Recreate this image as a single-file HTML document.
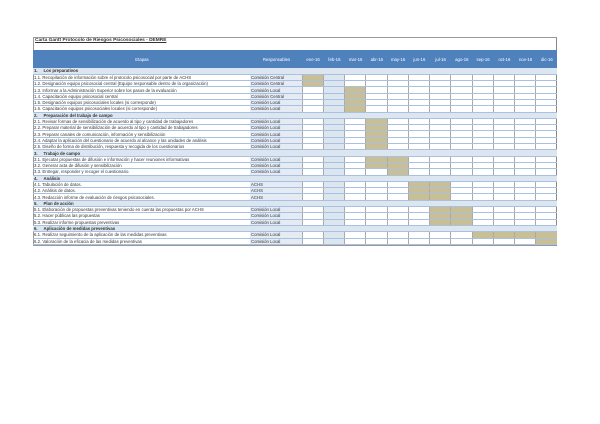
<!DOCTYPE html>
<html><head><meta charset="utf-8"><style>
body{margin:0;width:600px;height:424px;background:#fff;position:relative;font-family:"Liberation Sans",sans-serif;}
#box{position:absolute;left:33px;top:37px;width:524px;height:209px;border:1px solid #999;border-right:1px solid #888;box-sizing:border-box;}
.title{position:absolute;left:35px;top:38px;font-size:4.8px;font-weight:bold;color:#333;text-decoration:underline;}
table{position:absolute;left:33px;top:50px;border-collapse:collapse;table-layout:fixed;width:524px;}
td{padding:0 0 0 1px;font-size:4.3px;line-height:5px;height:6.3px;border-bottom:0.6px solid #a9c0de;white-space:nowrap;overflow:hidden;color:#333;box-sizing:border-box;}
tr.h td{height:18px;background:#4f81bd;color:#fff;text-align:center;border-bottom:none;font-size:4.3px;}
tr.s td{background:#dce6f1;font-weight:bold;}
td.r{background:#e4ebf5;}
td.m{border-left:0.7px solid #aaa;}
td.f{background:#dce6f1;}
td.t{background:#c8bf96;}
tr.s td.m{border-left:none;}
</style></head><body>
<div id="box"></div>
<div class="title">Carta Gantt Protocolo de Riesgos Psicosociales - DEMRE</div>
<table>
<colgroup><col style="width:217px"><col style="width:52px"><col span="12" style="width:21.25px"></colgroup>
<tr class="h"><td>Etapas</td><td>Responsables</td><td>ene-16</td><td>feb-16</td><td>mar-16</td><td>abr-16</td><td>may-16</td><td>jun-16</td><td>jul-16</td><td>ago-16</td><td>sep-16</td><td>oct-16</td><td>nov-16</td><td>dic-16</td></tr>
<tr class="s"><td>1.&nbsp;&nbsp;&nbsp;&nbsp;&nbsp;Los preparativos</td><td></td><td></td><td></td><td></td><td></td><td></td><td></td><td></td><td></td><td></td><td></td><td></td><td></td></tr>
<tr><td>1.1. Recopilación de información sobre el protocolo psicosocial por parte de ACHS</td><td class="r">Comisión Central</td><td class="m t"></td><td class="m f"></td><td class="m"></td><td class="m"></td><td class="m"></td><td class="m"></td><td class="m"></td><td class="m"></td><td class="m"></td><td class="m"></td><td class="m"></td><td class="m"></td></tr>
<tr><td>1.2. Designación equipo psicosocial central (Equipo responsable dentro de la organización)</td><td class="r">Comisión Central</td><td class="m t"></td><td class="m f"></td><td class="m"></td><td class="m"></td><td class="m"></td><td class="m"></td><td class="m"></td><td class="m"></td><td class="m"></td><td class="m"></td><td class="m"></td><td class="m"></td></tr>
<tr><td>1.3. Informar a la Administración Superior sobre los pasos de la evaluación</td><td class="r">Comisión Local</td><td class="m"></td><td class="m f"></td><td class="m t"></td><td class="m"></td><td class="m"></td><td class="m"></td><td class="m"></td><td class="m"></td><td class="m"></td><td class="m"></td><td class="m"></td><td class="m"></td></tr>
<tr><td>1.4. Capacitación equipo psicosocial central</td><td class="r">Comisión Central</td><td class="m"></td><td class="m f"></td><td class="m t"></td><td class="m"></td><td class="m"></td><td class="m"></td><td class="m"></td><td class="m"></td><td class="m"></td><td class="m"></td><td class="m"></td><td class="m"></td></tr>
<tr><td>1.5. Designación equipos psicosociales locales (si corresponde)</td><td class="r">Comisión Local</td><td class="m"></td><td class="m f"></td><td class="m t"></td><td class="m"></td><td class="m"></td><td class="m"></td><td class="m"></td><td class="m"></td><td class="m"></td><td class="m"></td><td class="m"></td><td class="m"></td></tr>
<tr><td>1.6. Capacitación equipos psicosociales locales (si corresponde)</td><td class="r">Comisión Local</td><td class="m"></td><td class="m f"></td><td class="m t"></td><td class="m"></td><td class="m"></td><td class="m"></td><td class="m"></td><td class="m"></td><td class="m"></td><td class="m"></td><td class="m"></td><td class="m"></td></tr>
<tr class="s"><td>2.&nbsp;&nbsp;&nbsp;&nbsp;&nbsp;Preparación del trabajo de campo</td><td></td><td></td><td></td><td></td><td></td><td></td><td></td><td></td><td></td><td></td><td></td><td></td><td></td></tr>
<tr><td>2.1. Revisar formas de sensibilización de acuerdo al tipo y cantidad de trabajadores</td><td class="r">Comisión Local</td><td class="m"></td><td class="m f"></td><td class="m"></td><td class="m t"></td><td class="m"></td><td class="m"></td><td class="m"></td><td class="m"></td><td class="m"></td><td class="m"></td><td class="m"></td><td class="m"></td></tr>
<tr><td>2.2. Preparar material de sensibilización de acuerdo al tipo y cantidad de trabajadores</td><td class="r">Comisión Local</td><td class="m"></td><td class="m f"></td><td class="m"></td><td class="m t"></td><td class="m"></td><td class="m"></td><td class="m"></td><td class="m"></td><td class="m"></td><td class="m"></td><td class="m"></td><td class="m"></td></tr>
<tr><td>2.3. Preparar canales de comunicación, información y sensibilización</td><td class="r">Comisión Local</td><td class="m"></td><td class="m f"></td><td class="m"></td><td class="m t"></td><td class="m"></td><td class="m"></td><td class="m"></td><td class="m"></td><td class="m"></td><td class="m"></td><td class="m"></td><td class="m"></td></tr>
<tr><td>2.4. Adaptar la aplicación del cuestionario de acuerdo al alcance y las unidades de análisis</td><td class="r">Comisión Local</td><td class="m"></td><td class="m f"></td><td class="m"></td><td class="m t"></td><td class="m"></td><td class="m"></td><td class="m"></td><td class="m"></td><td class="m"></td><td class="m"></td><td class="m"></td><td class="m"></td></tr>
<tr><td>2.5. Diseño de forma de distribución, respuesta y recogida de los cuestionarios</td><td class="r">Comisión Local</td><td class="m"></td><td class="m f"></td><td class="m"></td><td class="m t"></td><td class="m"></td><td class="m"></td><td class="m"></td><td class="m"></td><td class="m"></td><td class="m"></td><td class="m"></td><td class="m"></td></tr>
<tr class="s"><td>3.&nbsp;&nbsp;&nbsp;&nbsp;&nbsp;Trabajo de campo</td><td></td><td></td><td></td><td></td><td></td><td></td><td></td><td></td><td></td><td></td><td></td><td></td><td></td></tr>
<tr><td>3.1. Ejecutar propuestas de difusión e información y hacer reuniones informativas</td><td class="r">Comisión Local</td><td class="m"></td><td class="m f"></td><td class="m"></td><td class="m t"></td><td class="m t"></td><td class="m"></td><td class="m"></td><td class="m"></td><td class="m"></td><td class="m"></td><td class="m"></td><td class="m"></td></tr>
<tr><td>3.2. Generar acta de difusión y sensibilización</td><td class="r">Comisión Local</td><td class="m"></td><td class="m f"></td><td class="m"></td><td class="m t"></td><td class="m t"></td><td class="m"></td><td class="m"></td><td class="m"></td><td class="m"></td><td class="m"></td><td class="m"></td><td class="m"></td></tr>
<tr><td>3.3. Entregar, responder y recoger el cuestionario.</td><td class="r">Comisión Local</td><td class="m"></td><td class="m f"></td><td class="m"></td><td class="m"></td><td class="m t"></td><td class="m"></td><td class="m"></td><td class="m"></td><td class="m"></td><td class="m"></td><td class="m"></td><td class="m"></td></tr>
<tr class="s"><td>4.&nbsp;&nbsp;&nbsp;&nbsp;&nbsp;Análisis</td><td></td><td></td><td></td><td></td><td></td><td></td><td></td><td></td><td></td><td></td><td></td><td></td><td></td></tr>
<tr><td>4.1. Tabulación de datos.</td><td class="r">ACHS</td><td class="m"></td><td class="m f"></td><td class="m"></td><td class="m"></td><td class="m"></td><td class="m t"></td><td class="m t"></td><td class="m"></td><td class="m"></td><td class="m"></td><td class="m"></td><td class="m"></td></tr>
<tr><td>4.2. Análisis de datos.</td><td class="r">ACHS</td><td class="m"></td><td class="m f"></td><td class="m"></td><td class="m"></td><td class="m"></td><td class="m t"></td><td class="m t"></td><td class="m"></td><td class="m"></td><td class="m"></td><td class="m"></td><td class="m"></td></tr>
<tr><td>4.3. Redacción informe de evaluación de riesgos psicosociales.</td><td class="r">ACHS</td><td class="m"></td><td class="m f"></td><td class="m"></td><td class="m"></td><td class="m"></td><td class="m t"></td><td class="m t"></td><td class="m"></td><td class="m"></td><td class="m"></td><td class="m"></td><td class="m"></td></tr>
<tr class="s"><td>5.&nbsp;&nbsp;&nbsp;&nbsp;&nbsp;Plan de acción</td><td></td><td></td><td></td><td></td><td></td><td></td><td></td><td></td><td></td><td></td><td></td><td></td><td></td></tr>
<tr><td>5.1. Elaboración de propuestas preventivas teniendo en cuenta las propuestas por ACHS</td><td class="r">Comisión Local</td><td class="m"></td><td class="m f"></td><td class="m"></td><td class="m"></td><td class="m"></td><td class="m"></td><td class="m t"></td><td class="m t"></td><td class="m"></td><td class="m"></td><td class="m"></td><td class="m"></td></tr>
<tr><td>5.2. Hacer públicas las propuestas</td><td class="r">Comisión Local</td><td class="m"></td><td class="m f"></td><td class="m"></td><td class="m"></td><td class="m"></td><td class="m"></td><td class="m t"></td><td class="m t"></td><td class="m"></td><td class="m"></td><td class="m"></td><td class="m"></td></tr>
<tr><td>5.3. Realizar informe propuestas preventivas</td><td class="r">Comisión Local</td><td class="m"></td><td class="m f"></td><td class="m"></td><td class="m"></td><td class="m"></td><td class="m"></td><td class="m t"></td><td class="m t"></td><td class="m"></td><td class="m"></td><td class="m"></td><td class="m"></td></tr>
<tr class="s"><td>6.&nbsp;&nbsp;&nbsp;&nbsp;&nbsp;Aplicación de medidas preventivas</td><td></td><td></td><td></td><td></td><td></td><td></td><td></td><td></td><td></td><td></td><td></td><td></td><td></td></tr>
<tr><td>6.1. Realizar seguimiento de la aplicación de las medidas preventivas</td><td class="r">Comisión Local</td><td class="m"></td><td class="m f"></td><td class="m"></td><td class="m"></td><td class="m"></td><td class="m"></td><td class="m"></td><td class="m"></td><td class="m t"></td><td class="m t"></td><td class="m t"></td><td class="m t"></td></tr>
<tr><td>6.2. Valoración de la eficacia de las medidas preventivas</td><td class="r">Comisión Local</td><td class="m"></td><td class="m f"></td><td class="m"></td><td class="m"></td><td class="m"></td><td class="m"></td><td class="m"></td><td class="m"></td><td class="m"></td><td class="m"></td><td class="m"></td><td class="m t"></td></tr>
</table>
</body></html>
